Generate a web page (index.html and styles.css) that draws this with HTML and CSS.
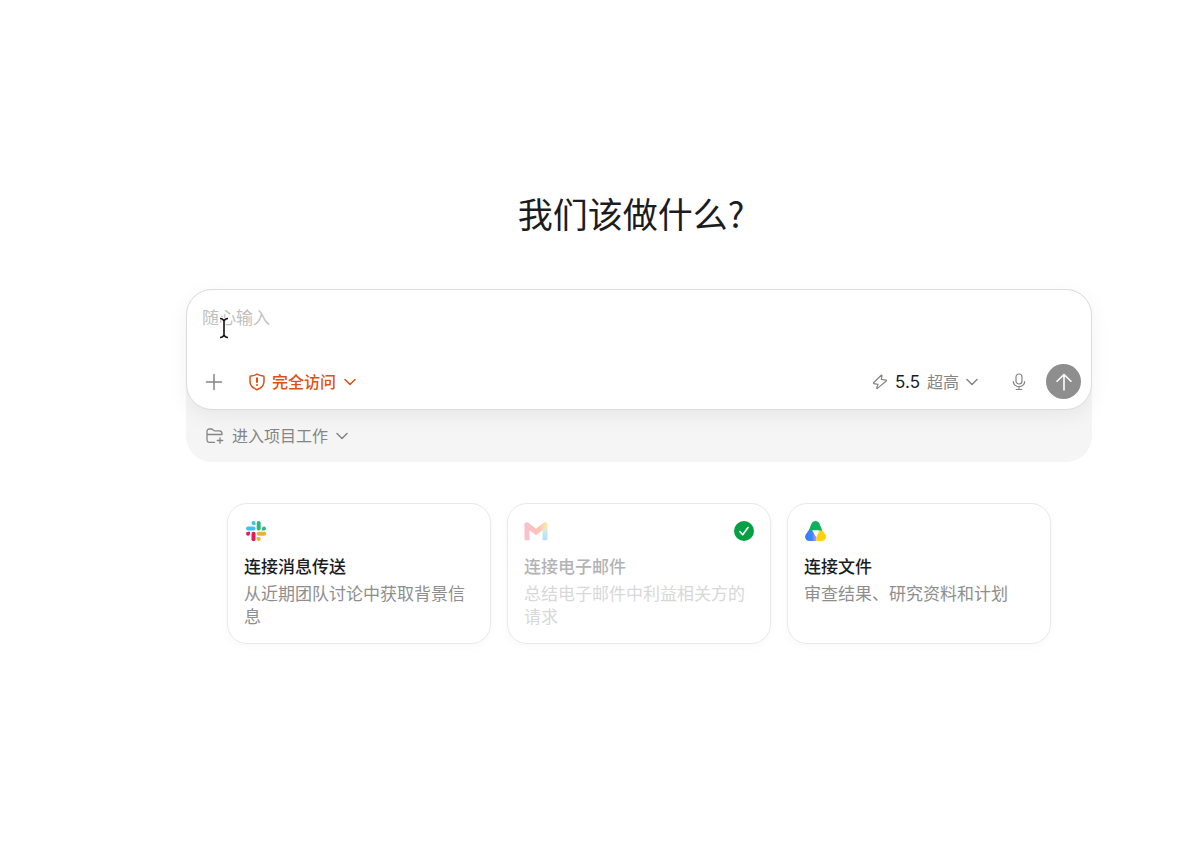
FILE: index.html
```html
<!DOCTYPE html>
<html lang="zh-CN">
<head>
    <meta charset="UTF-8">
    <meta name="viewport" content="width=device-width, initial-scale=1.0">
    <title>我们该做什么?</title>
    <link rel="stylesheet" href="styles.css">
</head>
<body>
    <main class="home">
        <h1 class="title">我们该做什么?</h1>

        <div class="tray">
            <form class="composer">
                <textarea class="prompt" rows="1" placeholder="随心输入" aria-label="随心输入"></textarea>
                <svg class="caret" width="10" height="22" viewBox="0 0 10 22" fill="none" aria-hidden="true">
                    <path d="M1 1.5Q4 1.5 5 4Q6 1.5 9 1.5M5 4v14M1 20.5Q4 20.5 5 18Q6 20.5 9 20.5" stroke="#fff" stroke-width="3"/>
                    <path d="M1 1.5Q4 1.5 5 4Q6 1.5 9 1.5M5 4v14M1 20.5Q4 20.5 5 18Q6 20.5 9 20.5" stroke="#111" stroke-width="1.6"/>
                </svg>
                <div class="toolbar">
                    <button type="button" class="tool add" aria-label="添加">
                        <svg width="18" height="18" viewBox="0 0 18 18"><path d="M9 1.5v15M1.500 9h15"/></svg>
                    </button>
                    <button type="button" class="tool access">
                        <svg width="18" height="18" viewBox="0 0 18 18"><path d="M9 1.200C7 2.400 4.800 2.900 2.800 3Q2 3.100 2 4V8.500c0 4 2.800 6.600 7 8.200c4.200-1.600 7-4.200 7-8.200V4Q16 3.100 15.200 3C13.200 2.900 11 2.400 9 1.200Z"/><path d="M9 5.200v3.800M9 12v.1" stroke-width="2"/></svg>
                        <span>完全访问</span>
                        <svg width="12" height="8" viewBox="0 0 12 8"><path d="M1 1.5l5 5 5-5"/></svg>
                    </button>
                    <button type="button" class="tool model">
                        <svg width="16" height="16" viewBox="0 0 16 16"><path class="thin" d="M9.200 1.300L1.600 8.700Q1.100 9.400 1.900 9.600L6 10.400L4.700 14Q4.600 14.900 5.400 14.400L14.300 7Q14.800 6.300 14 6.100L9.300 5.300L10 1.900Q10 .8 9.200 1.300Z"/></svg>
                        <span class="version">5.5</span>
                        <span>超高</span>
                        <svg width="12" height="8" viewBox="0 0 12 8"><path d="M1 1.5l5 5 5-5"/></svg>
                    </button>
                    <button type="button" class="tool mic" aria-label="语音输入">
                        <svg width="16" height="18" viewBox="0 0 16 18"><rect class="thin" x="5" y="1" width="6" height="10" rx="3"/><path class="thin" d="M2.300 8.500a5.700 5.200 0 0 0 11.400 0M8 13.700v2.700M5.200 16.500h5.600"/></svg>
                    </button>
                    <button type="submit" class="send" aria-label="发送">
                        <svg width="18" height="18" viewBox="0 0 18 18"><path d="M9 17V1.500M2 8.300l7-6.800 7 6.800"/></svg>
                    </button>
                </div>
            </form>
            <button type="button" class="tool project">
                <svg width="18" height="16" viewBox="0 0 18 16"><path d="M8.500 14.300H3.500Q1 14.300 1 11.800V3.500Q1 1 3.500 1h1.700q1 0 1.700.7l.7.7q.5.500 1.400.5h4Q16 2.900 16 5.600V6.500M1 6.500h15M14 9.800v5.400M11.300 12.500h5.400" stroke-width="1.300"/></svg>
                <span>进入项目工作</span>
                <svg width="12" height="8" viewBox="0 0 12 8"><path d="M1 1.5l5 5 5-5"/></svg>
            </button>
        </div>

        <div class="cards">
            <button type="button" class="card">
                <span class="card-head">
                    <svg width="24" height="24" viewBox="0 0 24 24">
                        <g fill="#36c5f0"><path d="M9.500 2a2 2 0 1 0 0 4h2V4a2 2 0 0 0-2-2Z"/><rect x="2" y="7.500" width="9.500" height="4" rx="2"/></g>
                        <g fill="#2eb67d"><path d="M22 9.500a2 2 0 1 0-4 0v2h2a2 2 0 0 0 2-2Z"/><rect x="12.700" y="2" width="4" height="9.500" rx="2"/></g>
                        <g fill="#ecb22e"><path d="M14.700 22a2 2 0 1 0 0-4h-2v2a2 2 0 0 0 2 2Z"/><rect x="12.700" y="12.700" width="9.500" height="4" rx="2"/></g>
                        <g fill="#e01e5a"><path d="M2 14.700a2 2 0 1 0 4 0v-2H4a2 2 0 0 0-2 2Z"/><rect x="7.500" y="12.700" width="4" height="9.500" rx="2"/></g>
                    </svg>
                </span>
                <span class="card-title">连接消息传送</span>
                <span class="card-text">从近期团队讨论中获取背景信息</span>
            </button>

            <button type="button" class="card done" disabled>
                <span class="card-head">
                    <svg class="logo" width="24" height="24" viewBox="0 0 24 24">
                        <defs>
                            <linearGradient id="mail-right" x1="0" y1="0" x2="0" y2="1">
                                <stop offset="0" stop-color="#fbbc04"/>
                                <stop offset=".4" stop-color="#8fd08a"/>
                                <stop offset=".7" stop-color="#4ab8e8"/>
                                <stop offset="1" stop-color="#3b9df5"/>
                            </linearGradient>
                            <linearGradient id="mail-fold" x1="0" y1="0" x2="1" y2="0">
                                <stop offset="0" stop-color="#f0506e"/>
                                <stop offset=".6" stop-color="#f4513a"/>
                                <stop offset="1" stop-color="#fbc704"/>
                            </linearGradient>
                        </defs>
                        <path d="M18.500 7l5-2.500V20q0 1.300-1.300 1.300h-3.700Z" fill="url(#mail-right)"/>
                        <path d="M.5 5l5 3v13.300H1.800Q.5 21.300.5 20Z" fill="#f0506e"/>
                        <path d="M.5 5.800C.5 3.300 3 2.600 4.800 4L12 9.700 19.200 4c1.800-1.400 4.300-.7 4.300 1.800 0 1.300-.5 2-1.500 2.800l-10 7.700L2 8.600C1 7.800.5 7.100.5 5.800Z" fill="url(#mail-fold)"/>
                    </svg>
                    <svg class="check" width="20" height="20" viewBox="0 0 20 20" role="img" aria-label="已连接">
                        <circle cx="10" cy="10" r="10" fill="#04a144"/>
                        <path d="M6 10.700l2.700 3L14 6.500"/>
                    </svg>
                </span>
                <span class="card-title">连接电子邮件</span>
                <span class="card-text">总结电子邮件中利益相关方的请求</span>
            </button>

            <button type="button" class="card">
                <span class="card-head">
                    <svg width="24" height="24" viewBox="0 0 24 24">
                        <defs>
                            <linearGradient id="drive-blue" x1="0" y1="0" x2="1" y2="0">
                                <stop offset="0" stop-color="#2b7bff"/>
                                <stop offset=".6" stop-color="#4285f4"/>
                                <stop offset="1" stop-color="#b9a3e8"/>
                            </linearGradient>
                        </defs>
                        <path d="M5.500 10L1.800 15.500C-.2 19 2.300 22 5.500 22h7V18L8.500 11.500Z" fill="url(#drive-blue)"/>
                        <path d="M17.500 10l3.700 5.500C23.200 19 20.700 22 17.500 22h-5v-4l3-6.500Z" fill="#fdd20a"/>
                        <path d="M4.800 11.500L7.300 5C9 1 14 1 15.700 5l2.500 6.500Z" fill="#0fb25a"/>
                        <path d="M8.500 11.500h6.400L11.700 17.500Z" fill="#fff"/>
                    </svg>
                </span>
                <span class="card-title">连接文件</span>
                <span class="card-text">审查结果、研究资料和计划</span>
            </button>
        </div>
    </main>
</body>
</html>
```

FILE: styles.css
```css
* {
    box-sizing: border-box;
}
body {
    margin: 0;
    background-color: #fff;
    color: #1a1c1f;
    font-family: Inter, "Noto Sans CJK SC", sans-serif;
    font-size: 16px;
}
button, textarea {
    font: inherit;
    color: inherit;
    background: none;
    border: none;
    padding: 0;
    margin: 0;
}
button {
    cursor: pointer;
}
svg {
    display: block;
    flex: none;
}
.home {
    padding: 187px 108px 40px 186px;
}
.title {
    margin: 0 0 50px;
    padding-right: 16px;
    font-family: "Noto Sans CJK SC", sans-serif;
    font-size: 35px;
    font-weight: 400;
    line-height: 52px;
    text-align: center;
}
.tray {
    background-color: #f5f5f5;
    border-radius: 26px;
}
.composer {
    position: relative;
    background-color: #fff;
    border: 1px solid #dcdcdc;
    border-radius: 26px;
    padding: 16px 10px 10px 15px;
    box-shadow: 0 6px 20px rgba(0, 0, 0, 0.06);
}
.prompt {
    display: block;
    width: 100%;
    height: 58px;
    font-size: 17px;
    line-height: 24px;
    resize: none;
    outline: none;
}
.prompt::placeholder {
    color: #bfbfbf;
    opacity: 1;
}
/* mouse pointer over the text box */
.caret {
    position: absolute;
    left: 32px;
    top: 27px;
}
.toolbar {
    display: flex;
    align-items: center;
}
.tool {
    display: flex;
    align-items: center;
    gap: 8px;
    color: #858585;
    line-height: 24px;
}
.tool svg {
    fill: none;
    stroke: currentColor;
    stroke-width: 1.5;
    stroke-linecap: round;
    stroke-linejoin: round;
}
.tool .thin {
    stroke-width: 1.2;
}
.add {
    padding: 0 3px;
}
.access {
    margin-left: 22px;
    gap: 6px;
    color: #e0500f;
    font-weight: 500;
}
.access span {
    margin-right: 2px;
}
.model {
    margin-left: auto;
    gap: 7px;
}
.version {
    color: #1a1c1f;
    font-size: 17px;
}
.mic {
    margin: 0 19px 0 33px;
}
.send {
    display: flex;
    align-items: center;
    justify-content: center;
    width: 35px;
    height: 35px;
    border-radius: 50%;
    background-color: #8e8e8e;
}
.send svg {
    fill: none;
    stroke: #fff;
    stroke-width: 1.6;
    stroke-linecap: round;
    stroke-linejoin: round;
}
.project {
    padding: 14px 20px;
}
.cards {
    display: grid;
    grid-template-columns: repeat(3, 1fr);
    gap: 16px;
    margin: 41px 41px 0;
}
.card {
    display: flex;
    flex-direction: column;
    min-height: 140px;
    padding: 15px 16px 14px;
    border: 1px solid #e9e9e9;
    border-radius: 20px;
    box-shadow: 0 2px 8px rgba(0, 0, 0, 0.03);
    font-size: 17px;
    line-height: 23px;
    text-align: left;
}
.card-head {
    display: flex;
    align-items: center;
    justify-content: space-between;
    align-self: stretch;
    margin-bottom: 13px;
}
.card-title {
    margin-bottom: 4px;
    font-weight: 500;
}
.card-text {
    color: #8e8e8e;
}
.done {
    cursor: default;
}
.done .logo {
    opacity: 0.35;
}
.done .card-title {
    color: #b2b3b5;
}
.done .card-text {
    color: #d8d8d8;
}
.check path {
    fill: none;
    stroke: #fff;
    stroke-width: 1.6;
    stroke-linecap: round;
    stroke-linejoin: round;
}
```
